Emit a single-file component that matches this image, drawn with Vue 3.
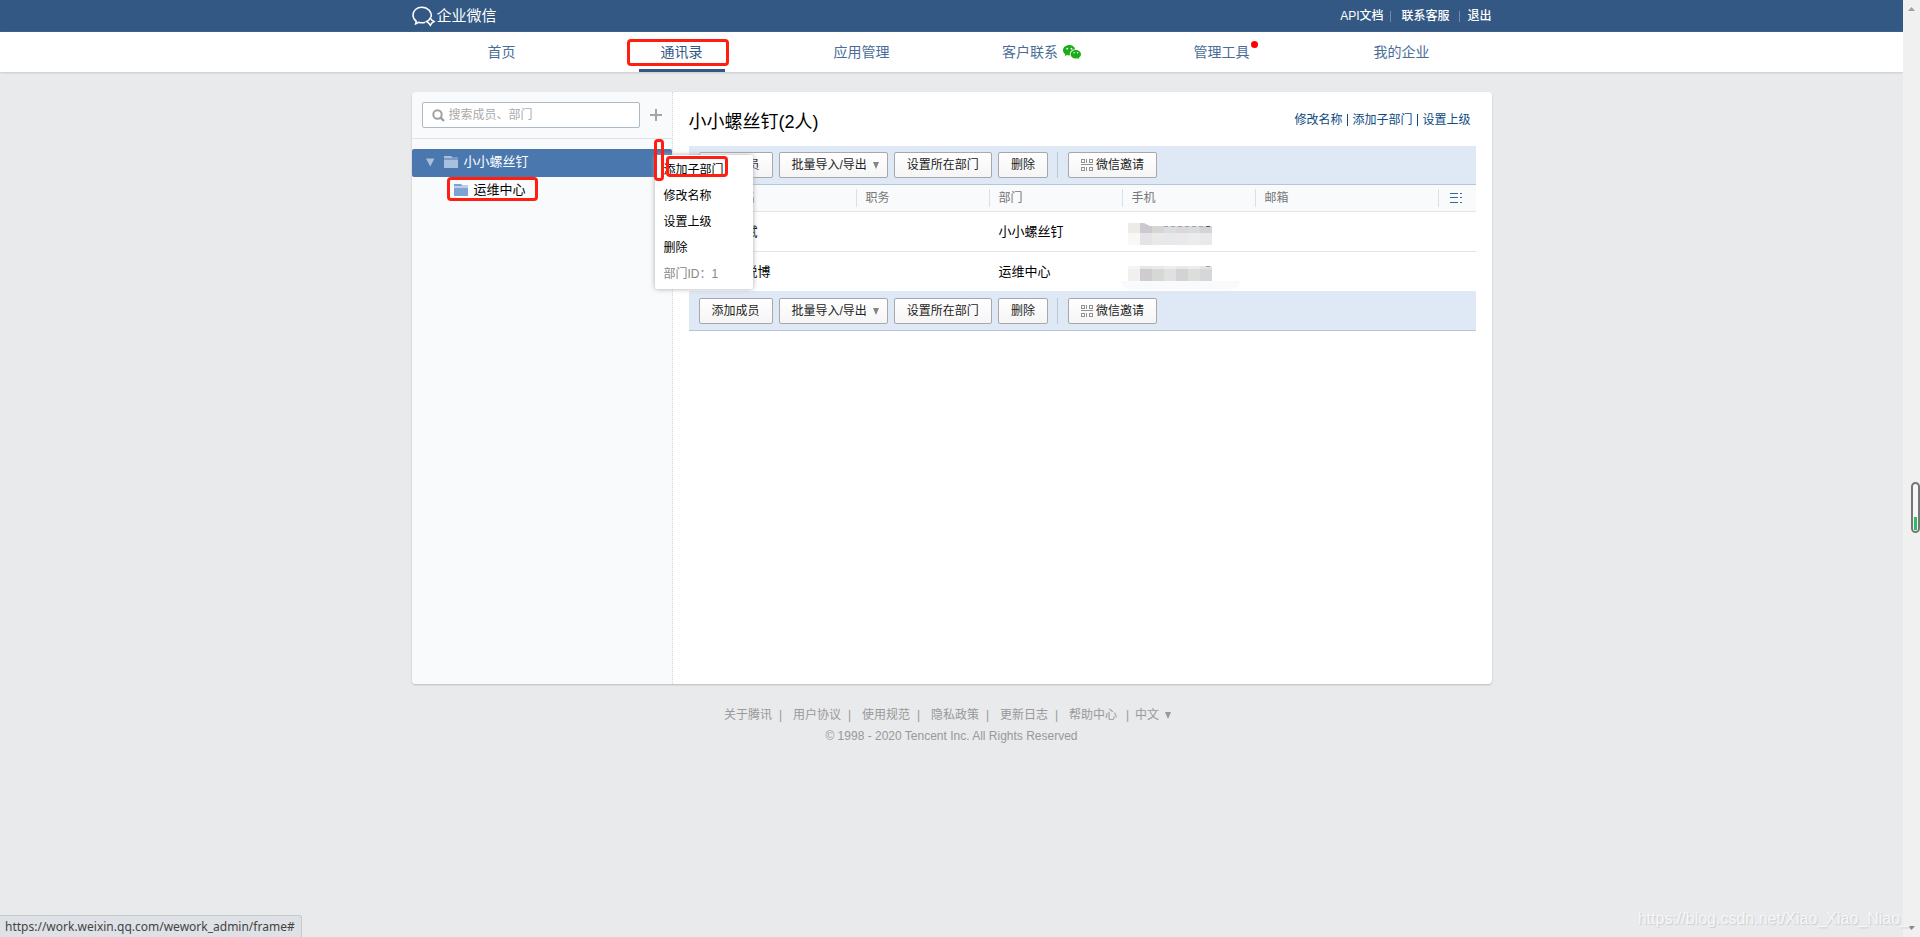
<script setup>
import { ref } from 'vue'

const navItems = [
  { label: '首页' },
  { label: '通讯录', active: true },
  { label: '应用管理' },
  { label: '客户联系', wechat: true },
  { label: '管理工具', dot: true },
  { label: '我的企业' },
]
const keyword = ref('')
const menuItems = ['添加子部门', '修改名称', '设置上级', '删除']
const bars = ['top', 'bottom']
const footerLinks = ['关于腾讯', '用户协议', '使用规范', '隐私政策', '更新日志', '帮助中心']
const members = [
  {
    name: '　斌',
    dept: '小小螺丝钉',
    mosaic: [
      { y: 2, h: 10, colors: ['#edebe7', '#cccacf', '#d6d6d6', '#dcdde0', '#dad8db', '#d9dcdc', '#d2d2d7'] },
      { y: 12, h: 12, colors: ['#f9f8f5', '#e4e4e6', '#e9e9e9', '#e7e8ec', '#e9e9eb', '#ececec', '#e8e9eb'] },
    ],
  },
  {
    name: '　悦博',
    dept: '运维中心',
    mosaic: [
      { y: 5, h: 3, colors: ['#f5f5f1', '#e6e5e7', '#e8e9e8', '#ededee', '#eae9ea', '#ececec', '#e2e3e5'] },
      { y: 8, h: 12, colors: ['#f0f0ec', '#cecccf', '#d6d8d6', '#dfe0e2', '#d4d2d5', '#dcdedc', '#d6d7d8'] },
    ],
  },
]
</script>

<template>
  <div class="window">
    <div class="page">
      <header class="top">
        <div class="wrap top-inner">
          <a href="#" class="logo">
            <svg width="24" height="21" viewBox="0 0 24 21" fill="none" stroke="#fff" stroke-width="1.5">
              <path d="M19.2 11.2C20 6.2 16 1.2 9.8 1.2C4.800 1.200 1 4.600 1 9C1 11.800 2.300 13.800 4.200 15.200L3.600 17.800L6.800 16.300C9 17 11.400 17 13.300 16.300" />
              <path stroke-width="1.500" d="M18.300 11.800l1.500 2.300l2.300 1.500l-2.300 1.400l-1.500 2.300l-1.500-2.200l-2.300-1.500l2.300-1.400z" />
            </svg>
            <span>企业微信</span>
          </a>
          <nav class="top-links">
            <a href="#">API文档</a><i></i><a href="#" class="mid">联系客服</a><i></i><a href="#">退出</a>
          </nav>
        </div>
      </header>

      <nav class="nav">
        <div class="wrap nav-inner">
          <a v-for="item in navItems" :key="item.label" href="#" class="nav-item">
            <span class="nav-label" :class="{ active: item.active }">
              {{ item.label }}
              <svg v-if="item.wechat" class="wechat" width="18" height="15" viewBox="0 0 18 15">
                <path fill="#1aad19" d="M6.300 0C2.800 0 0 2.300 0 5.200c0 1.700.9 3.100 2.300 4.100L1.700 11.200l2.200-1.100c.8.200 1.500.4 2.400.4h.6C6.100 7.200 8.600 4.300 12.200 4.200C11.700 1.700 9.200 0 6.300 0z" />
                <path fill="#1aad19" d="M18 9.200c0-2.400-2.400-4.300-5.200-4.300S7.600 6.800 7.600 9.200s2.300 4.300 5.200 4.300c.6 0 1.200-.1 1.800-.3l1.800.9l-.5-1.500C17.200 11.800 18 10.500 18 9.200z" />
                <g fill="#fff"><circle cx="4.200" cy="3.700" r=".9" /><circle cx="8.500" cy="3.700" r=".9" /><circle cx="11.100" cy="7.800" r=".7" /><circle cx="14.500" cy="7.800" r=".7" /></g>
              </svg>
              <b v-if="item.dot" class="dot"></b>
              <b v-if="item.active" class="mark mark-nav"></b>
            </span>
          </a>
        </div>
      </nav>

      <div class="wrap panel">
        <aside class="side">
          <div class="search-row">
            <label class="search">
              <svg width="13" height="13" viewBox="0 0 13 13" fill="none" stroke="#a0a0a0" stroke-width="2"><circle cx="5.500" cy="5.500" r="4.200" /><path d="M8.600 8.600L12 12" stroke-width="2.400" /></svg>
              <input v-model="keyword" type="text" placeholder="搜索成员、部门" aria-label="搜索成员、部门" />
            </label>
            <button class="plus" type="button" aria-label="添加">
              <svg width="12" height="12" viewBox="0 0 12 12" stroke="#a3a5a8" stroke-width="2"><path d="M6 0V12M0 6H12" /></svg>
            </button>
          </div>
          <div class="tree">
            <a href="#" class="node root">
              <svg width="9" height="9" viewBox="0 0 9 9" fill="#a9bfdb"><path d="M0 .5H8.500L4.250 8.500z" /></svg>
              <svg class="folder" width="14" height="12" viewBox="0 0 14 12" fill="#a9bfdf"><path d="M0 0H7L8.500 1.500H14V2.500H0zM0 3.500H14V12H0z" /></svg>
              小小螺丝钉
            </a>
            <a href="#" class="node child">
              <svg class="folder" width="14" height="12" viewBox="0 0 14 12" fill="#7da3d3"><path d="M0 0H7L8.500 1.500H14V2.500H0zM0 3.500H14V12H0z" /></svg>
              运维中心
              <b class="mark mark-child"></b>
            </a>
            <div class="menu">
              <button v-for="m in menuItems" :key="m" type="button">{{ m }}</button>
              <p>部门ID：1</p>
              <b class="mark mark-item"></b>
              <b class="mark mark-tall"></b>
            </div>
          </div>
        </aside>

        <main class="main">
          <div class="head">
            <h1>小小螺丝钉(2人)</h1>
            <div class="actions"><a href="#">修改名称</a><a href="#">添加子部门</a><a href="#">设置上级</a></div>
          </div>
          <template v-for="bar in bars" :key="bar">
            <div class="bar" :class="bar">
              <button type="button">添加成员</button>
              <button type="button">批量导入/导出<svg class="caret" width="6" height="7" viewBox="0 0 6 7" fill="#858585"><path d="M0 0H6L3 7z" /></svg></button>
              <button type="button">设置所在部门</button>
              <button type="button">删除</button>
              <i class="split"></i>
              <button type="button">
                <svg class="qr" width="12" height="12" viewBox="0 0 12 12" fill="none" stroke="#929292" shape-rendering="crispEdges">
                  <path d="M.5 .5h3v3h-3zM8.500 .5h3v3h-3zM.5 8.500h3v3h-3zM8.500 8.500h3v3h-3zM5.500 0v4M0 5.500h12M5.500 8v4" />
                </svg>微信邀请
              </button>
            </div>
            <table v-if="bar === 'top'">
              <colgroup><col class="c-name" /><col class="c-mid" /><col class="c-mid" /><col class="c-mid" /><col /><col class="c-tool" /></colgroup>
              <thead>
                <tr>
                  <th class="name">姓名</th>
                  <th><span>职务</span></th>
                  <th><span>部门</span></th>
                  <th><span>手机</span></th>
                  <th><span>邮箱</span></th>
                  <th>
                    <span class="tool"><svg width="13" height="10" viewBox="0 0 13 10" stroke="#3f6596" shape-rendering="crispEdges"><path d="M0 .5h8M0 4.500h8M0 9.500h8M10 .5h2M10 4.500h2M10 9.500h2" /></svg></span>
                  </th>
                </tr>
              </thead>
              <tbody>
                <tr v-for="m in members" :key="m.dept">
                  <td class="name">{{ m.name }}</td>
                  <td></td>
                  <td>{{ m.dept }}</td>
                  <td class="phone">
                    <svg width="120" height="30" viewBox="-7 0 120 30">
                      <path v-if="m.mosaic[0].y === 5" fill="#f9fafc" d="M-7 20H112Q111 28 102 28H3Q-5 28 -7 20z" />
                      <g v-for="band in m.mosaic" :key="band.y">
                        <rect v-for="(c, i) in band.colors" :key="i" :x="i * 12" :y="band.y" width="12" :height="band.h" :fill="c" />
                      </g>
                      <path v-if="m.mosaic[0].y === 2" fill="#fff" d="M16 2H84V5H22z" />
                      <path v-if="m.mosaic[0].y === 2" stroke="#a3a4ab" stroke-width="1" stroke-dasharray="4 3" d="M36 5.500H78" />
                      <path v-if="m.mosaic[0].y === 2" stroke="#4f5468" d="M78 5.500H82" />
                      <path v-else stroke="#a0a3ae" d="M78 5.500H82" />
                    </svg>
                  </td>
                  <td></td>
                  <td></td>
                </tr>
              </tbody>
            </table>
          </template>
        </main>
      </div>

      <footer class="footer">
        <div class="foot-links">
          <template v-for="l in footerLinks" :key="l"><a href="#">{{ l }}</a><i>|</i></template>
          <a href="#">中文<svg class="caret" width="6" height="7" viewBox="0 0 6 7" fill="#999"><path d="M0 0H6L3 7z" /></svg></a>
        </div>
        <p>© 1998 - 2020 Tencent Inc. All Rights Reserved</p>
      </footer>
    </div>

    <div class="scroll">
      <svg width="7" height="4" viewBox="0 0 7 4" fill="#a0a0a0"><path d="M3.500 0L7 4H0z" /></svg>
      <div class="gauge"><i></i></div>
      <svg width="7" height="4" viewBox="0 0 7 4" fill="#8a8a8a"><path d="M3.500 4L7 0H0z" /></svg>
    </div>
    <div class="status">https://work.weixin.qq.com/wework_admin/frame#</div>
    <div class="watermark">https://blog.csdn.net/Xiao_Xiao_Niao_</div>
  </div>
</template>

<style>
body { background: #e8eaec; }
</style>

<style scoped>
* { box-sizing: border-box; }
.window {
  position: relative;
  display: flex;
  min-height: 100vh;
  overflow: hidden;
  font: 12px/20px "Liberation Sans", "Noto Sans CJK SC", sans-serif;
  color: #000;
  background: #e8eaec;
}
a { color: inherit; text-decoration: none; }
i, b { font-style: normal; font-weight: normal; }
p, h1 { margin: 0; font-weight: normal; }
svg { flex: none; }
button { font: inherit; color: inherit; margin: 0; cursor: pointer; }
.page { flex: 1; min-width: 0; }
.wrap { max-width: 1080px; margin: 0 auto; }

.top { background: #335883; color: #fff; }
.top-inner { display: flex; justify-content: space-between; align-items: center; height: 32px; }
.logo { display: flex; align-items: center; gap: 1px; font-size: 15px; }
.top-links { display: flex; align-items: center; font-weight: 500; }
.top-links i { width: 1px; height: 11px; margin: 0 7px; background: #6f8bab; }
.top-links .mid { margin: 0 3px; }

.nav { background: #fff; box-shadow: 0 1px 2px #c8cacc; }
.nav-inner { display: flex; }
.nav-item { flex: 1; display: flex; justify-content: center; font-size: 14px; color: #4a6d98; }
.nav-label { position: relative; height: 40px; line-height: 40px; padding: 0 22px; }
.nav-label.active { color: #335883; border-bottom: 3px solid #335883; }
.wechat { display: inline-block; vertical-align: middle; margin: -2px 0 0 1px; }
.dot { position: absolute; top: 9px; right: 14px; width: 7px; height: 7px; border-radius: 50%; background: #f00; }

.mark { position: absolute; border: 3px solid #ff1e10; border-radius: 4px; pointer-events: none; }
.mark-nav { top: 7px; left: -12px; right: -4px; height: 27px; }
.mark-child { top: 0; left: 35px; width: 91px; height: 24px; }
.mark-item { top: 1px; left: 11px; width: 62px; height: 21px; }
.mark-tall { top: -16px; left: -1px; width: 10px; height: 42px; }

.panel { display: flex; margin-top: 20px; min-height: 592px; background: #fff; border-radius: 4px; box-shadow: 0 1px 2px #bbb; }
.side { width: 261px; flex: none; background: #f9fafc; border-right: 1px dotted #cfd8e2; border-radius: 4px 0 0 4px; }
.search-row { display: flex; align-items: center; gap: 10px; padding: 10px; border-bottom: 1px solid #e0e3e7; }
.search { flex: 1; display: flex; align-items: center; gap: 4px; height: 26px; padding-left: 9px; background: #fff; border: 1px solid #acb9c7; border-radius: 2px; }
.search input { flex: 1; min-width: 0; padding: 0; border: 0; outline: 0; background: none; font: inherit; }
.search input::placeholder { color: #aaa; opacity: 1; }
.plus { display: flex; padding: 0; border: 0; background: none; }
.tree { position: relative; padding-top: 10px; }
.node { position: relative; display: flex; align-items: center; height: 28px; padding-bottom: 2px; font-size: 13px; line-height: 26px; }
.root { padding-left: 14px; background: #4a77ae; color: #fff; border-radius: 2px; }
.root .folder { margin: 0 6px 0 9px; }
.child { padding-left: 42px; }
.child .folder { margin-right: 6px; }
.menu { position: absolute; z-index: 2; top: 16px; left: 243px; width: 98px; padding: 2px 0; background: #fff; border-radius: 2px; box-shadow: 0 0 5px #aaa; }
.menu button, .menu p { display: block; width: 100%; height: 26px; padding: 0 9px; border: 0; background: none; line-height: 26px; text-align: left; }
.menu p { color: #888; }

.main { flex: 1; min-width: 0; padding: 0 16px; }
.head { display: flex; justify-content: space-between; padding: 13px 5px 0 0; height: 54px; }
h1 { font-size: 18px; line-height: 34px; }
.actions { display: flex; align-items: center; height: 30px; color: #0c4a80; }
.actions a { line-height: 12px; }
.actions a + a { margin-left: 5px; padding-left: 4px; border-left: 1px solid #0c4a80; }
.bar { display: flex; align-items: center; gap: 6px; padding: 6px 10px; background: #dfe8f5; border-bottom: 1px solid #b8c5d6; }
.bar.bottom { padding-top: 7px; }
.bar button { display: flex; align-items: center; height: 26px; padding: 0 12px; border: 1px solid #a6a8ab; border-radius: 2px; background: linear-gradient(#fff, #f5f5f5); color: #222; white-space: nowrap; }
.bar .caret { margin-left: 6px; margin-right: -4px; }
.qr { margin-right: 3px; }
.split { width: 1px; height: 26px; margin: 0 4px 0 3px; background: #b9c7d8; }
table { width: 100%; table-layout: fixed; border-collapse: separate; border-spacing: 0; }
.c-name { width: 167px; }
.c-mid { width: 133px; }
.c-tool { width: 38px; }
th { height: 27px; padding: 0; background: #f9fafc; border-bottom: 1px solid #e2e4e6; font-weight: normal; color: #777; text-align: left; }
th span { display: block; height: 18px; line-height: 18px; padding-left: 9px; border-left: 1px solid #dcdfe4; }
th .tool { display: flex; align-items: center; padding-left: 11px; }
td { height: 40px; padding: 0 0 0 10px; border-bottom: 1px solid #e2e4e6; font-size: 13px; }
tbody tr:last-child td { height: 39px; border: 0; }
th.name, td.name { padding-left: 43px; }
td.phone { padding: 0; }
.phone svg { display: block; margin: 9px 0 0 -1px; }

.footer { padding-top: 21px; color: #999; text-align: center; }
.foot-links { display: flex; justify-content: center; }
.foot-links i { width: 21px; padding-left: 7px; text-align: left; }
.foot-links i:last-of-type { width: 18px; padding-left: 9px; }
.foot-links .caret { margin: 0 8px 0 6px; }
.footer p { padding-top: 1px; }

.scroll { flex: none; width: 17px; display: flex; flex-direction: column; align-items: center; justify-content: space-between; padding: 7px 0; background: #f0f0f0; }
.gauge { align-self: flex-end; display: flex; align-items: flex-end; width: 9px; height: 51px; padding: 1px; margin-top: 78px; border: 2px solid #777; border-radius: 5px; background: #f7f7f7; }
.gauge i { width: 3px; height: 13px; background: #2bbf60; }
.status { position: absolute; left: 0; bottom: 0; height: 22px; padding: 0 6px 0 5px; border: solid #c6c8cb; border-width: 1px 1px 0 0; border-radius: 0 3px 0 0; background: #dee1e6; color: #444; font: 12px/21px "Noto Sans", sans-serif; }
.watermark { position: absolute; right: 11px; bottom: 9px; font-size: 16px; line-height: 18px; color: #f6f7f8; text-shadow: 1px 1px 1px #c9cbce; }
</style>
